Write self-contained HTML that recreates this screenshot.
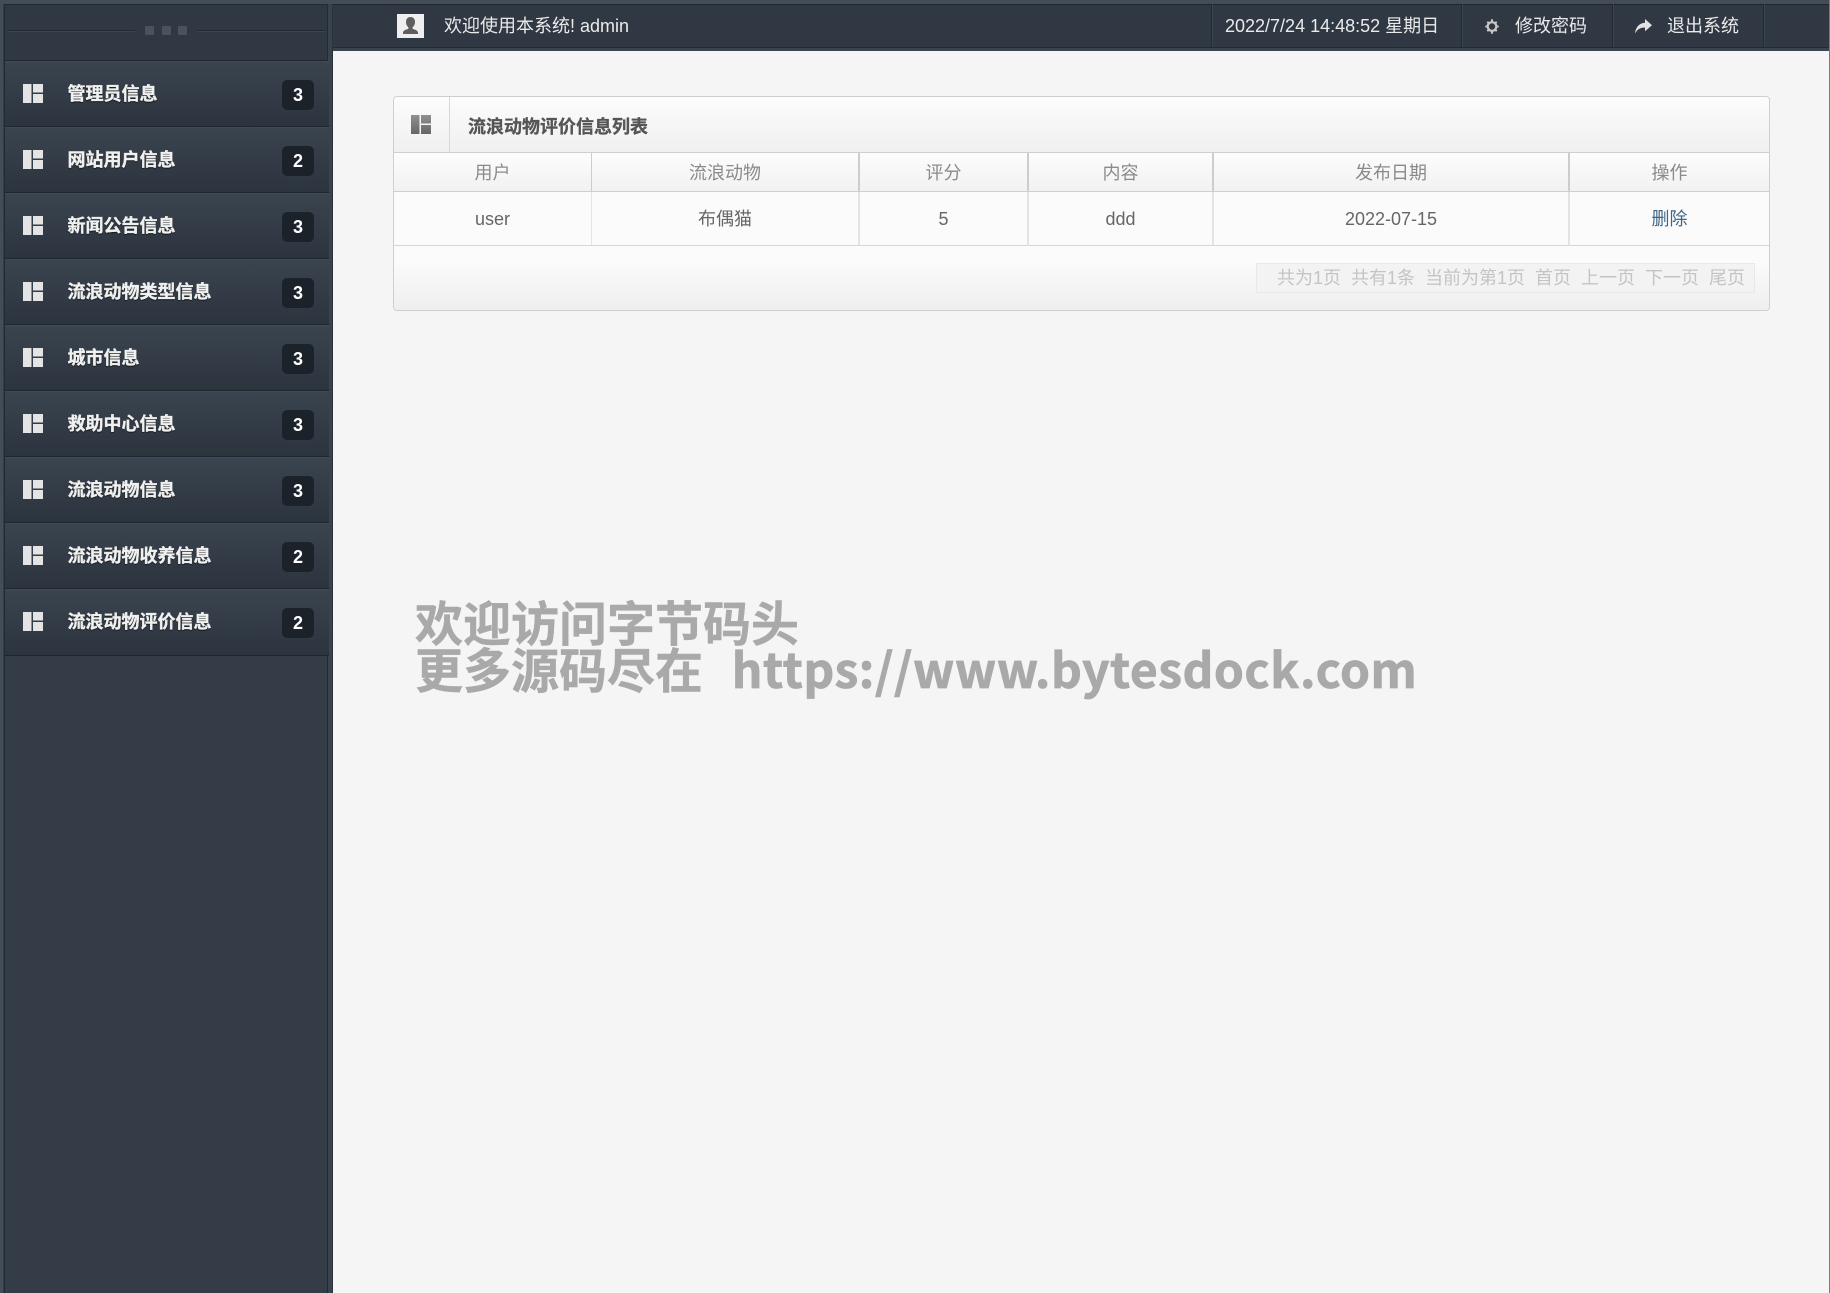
<!DOCTYPE html>
<html lang="zh"><head><meta charset="utf-8"><title>流浪动物评价信息列表</title>
<style>
*{box-sizing:border-box}
html,body{margin:0;padding:0;width:1830px;height:1293px;overflow:hidden}
body{background:#f5f5f5;font:18px/24px "Liberation Sans","Noto Sans CJK SC",sans-serif;color:#666;position:relative}
.a{position:absolute}
#top{left:0;top:0;width:1830px;height:51px;background:#2f3843;border-top:4px solid #434d58;box-shadow:inset 0 1px 0 #20262e,inset 0 -3px 0 #3a444f,inset 0 -4px 0 #232a32}
#side{left:0;top:0;width:333px;height:1293px;background:#333c47;border-left:3px solid #434d58}
#side:before{content:"";position:absolute;left:1px;top:0;bottom:0;width:1px;background:#222a32}
#side:after{content:"";position:absolute;right:0;top:0;bottom:0;width:4px;background:#39434e;border-left:1px solid #222a32;border-right:1px solid #2a323b}
#band{left:0;top:0;width:1830px;height:4px;background:#434d58}
#sh{left:5px;top:4px;width:325px;height:57px;background:#2f3843;border-top:1px solid #222930;border-bottom:1px solid #1e252c}
.ln{height:2px;top:25px;background:#222930;border-bottom:1px solid #3b4550}
.dot{top:21px;width:9px;height:9px;background:#4a535c;border-radius:1px}
.item{left:5px;width:324px;height:66px;background:linear-gradient(#3a444f,#2c343e);border-bottom:1px solid #1e252c;box-shadow:inset 0 1px 0 #424c57}
.item b{position:absolute;left:62.500px;top:20.500px;color:#f0f0f0;font-size:18px;line-height:24px;white-space:nowrap;text-shadow:0 1px 1px #111;-webkit-text-stroke:.35px #f0f0f0}
.badge{position:absolute;left:277px;top:19px;width:32px;height:30px;background:#1b222a;border-radius:5px;color:#fff;font-weight:bold;text-align:center;line-height:31px;font-size:18px;box-shadow:0 0 1px #3c4550}
.ic{position:absolute;left:18px;top:23px}
.tt{color:#eaeaea;white-space:nowrap;top:14px}
.sep{top:4px;width:2px;height:43px;background:#222930;border-right:1px solid #3b4550}
#main{left:333px;top:51px;width:1494px;height:1242px;background:#f5f5f5}
#panel{left:393px;top:96px;width:1377px;height:215px;border:1px solid #cfcfcf;border-radius:4px;background:#fbfbfb;overflow:hidden}
#title{left:0;top:0;width:1375px;height:56px;background:linear-gradient(#fcfcfc,#f0f0f0);border-bottom:1px solid #cfcfcf}
#title b{position:absolute;left:74px;top:17.500px;color:#555;font-size:18px;line-height:24px;-webkit-text-stroke:.3px #555}
.th{top:56px;height:39px;background:linear-gradient(#fdfdfd,#f1f1f1);border-bottom:1px solid #cfcfcf;border-right:2px solid #cdcdcd;text-align:center;line-height:40px;color:#8a8a8a}
.td{top:95px;height:54px;background:#fbfbfb;border-bottom:1px solid #d6d6d6;border-right:2px solid #e4e4e4;text-align:center;line-height:54px;color:#666}
#foot{left:0;top:149px;width:1375px;height:64px;background:linear-gradient(#fbfbfb 25%,#eeeeee)}
#pg{left:862px;top:17px;width:499px;height:30px;background:#f3f3f3;border:1px solid #e8e8e8;color:#c4c4c4;white-space:nowrap;line-height:29px;padding-left:20px;font-size:18px}
#pg span{margin-right:10px}
#wm{left:415px;top:597px;font-family:"Noto Sans CJK SC",sans-serif;font-weight:700;font-size:48px;line-height:47px;color:#a9a9a9;white-space:pre;-webkit-text-stroke:.4px #a9a9a9}
#wm i{font-style:normal;letter-spacing:.5px;margin-left:7px;-webkit-text-stroke:.8px #a9a9a9}
</style></head><body>
<div class="a" id="main"></div>
<div class="a" id="top"></div>
<div class="a" style="left:1829px;top:0;width:1px;height:1293px;background:#8d7377"></div>
<div class="a" style="left:397px;top:14px;width:27px;height:24px;background:#efefef"><svg width="27" height="24" viewBox="0 0 27 24"><path d="M13.500 3c3 0 4.500 2.200 4.500 5 0 2.600-1.200 4.300-2.400 5.300v1.500c2.600 1 5 1.500 5.400 3.700V20H6v-1.500c.4-2.200 2.800-2.700 5.400-3.700v-1.500C10.200 12.300 9 10.600 9 8c0-2.800 1.500-5 4.500-5z" fill="#5f5f5f"/></svg></div>
<div class="a tt" style="left:444px">欢迎使用本系统! admin</div>
<div class="a sep" style="left:1211px"></div>
<div class="a tt" style="left:1225px">2022/7/24 14:48:52 星期日</div>
<div class="a sep" style="left:1461px"></div>
<svg class="a" style="left:1484px;top:18px" width="16" height="17" viewBox="0 0 16 17"><circle cx="8" cy="8.500" r="4.300" fill="none" stroke="#c8c8c8" stroke-width="2.200"/><g stroke="#c8c8c8" stroke-width="2"><path d="M8 1.200v2.500M8 13.300v2.500M1.300 8.500h2.500M12.200 8.500h2.500M3.300 3.800l1.800 1.800M10.900 11.400l1.800 1.800M3.300 13.200l1.800-1.800M10.900 5.600l1.800-1.800"/></g></svg>
<div class="a tt" style="left:1515px">修改密码</div>
<div class="a sep" style="left:1612px"></div>
<svg class="a" style="left:1634px;top:18px" width="19" height="17" viewBox="0 0 19 17"><path d="M11 1l7 6.300-7 6V9.500C6.500 9.500 3.500 11 1 15.500 1.500 9.500 5 5 11 4.700z" fill="#e2e2e2"/></svg>
<div class="a tt" style="left:1667px">退出系统</div>
<div class="a sep" style="left:1763px"></div>

<div class="a" id="side">
<div class="a" id="sh" style="left:2px">
<div class="a ln" style="left:2px;width:128px"></div><div class="a ln" style="left:193px;width:128px"></div>
<div class="a dot" style="left:140px"></div><div class="a dot" style="left:157px"></div><div class="a dot" style="left:173px"></div>
</div>
</div>
<div class="a" style="left:0;top:0;width:333px;height:4px;background:#434d58"></div>

<div class="a item" style="top:61px"><svg class="ic" width="20" height="19" viewBox="0 0 20 19"><path d="M0 0h8.500v19H0zM10 0h10v8.500H10zM10 10h10v9H10z" fill="#e4e4e4"/></svg><b>管理员信息</b><span class="badge">3</span></div>
<div class="a item" style="top:127px"><svg class="ic" width="20" height="19" viewBox="0 0 20 19"><path d="M0 0h8.500v19H0zM10 0h10v8.500H10zM10 10h10v9H10z" fill="#e4e4e4"/></svg><b>网站用户信息</b><span class="badge">2</span></div>
<div class="a item" style="top:193px"><svg class="ic" width="20" height="19" viewBox="0 0 20 19"><path d="M0 0h8.500v19H0zM10 0h10v8.500H10zM10 10h10v9H10z" fill="#e4e4e4"/></svg><b>新闻公告信息</b><span class="badge">3</span></div>
<div class="a item" style="top:259px"><svg class="ic" width="20" height="19" viewBox="0 0 20 19"><path d="M0 0h8.500v19H0zM10 0h10v8.500H10zM10 10h10v9H10z" fill="#e4e4e4"/></svg><b>流浪动物类型信息</b><span class="badge">3</span></div>
<div class="a item" style="top:325px"><svg class="ic" width="20" height="19" viewBox="0 0 20 19"><path d="M0 0h8.500v19H0zM10 0h10v8.500H10zM10 10h10v9H10z" fill="#e4e4e4"/></svg><b>城市信息</b><span class="badge">3</span></div>
<div class="a item" style="top:391px"><svg class="ic" width="20" height="19" viewBox="0 0 20 19"><path d="M0 0h8.500v19H0zM10 0h10v8.500H10zM10 10h10v9H10z" fill="#e4e4e4"/></svg><b>救助中心信息</b><span class="badge">3</span></div>
<div class="a item" style="top:457px"><svg class="ic" width="20" height="19" viewBox="0 0 20 19"><path d="M0 0h8.500v19H0zM10 0h10v8.500H10zM10 10h10v9H10z" fill="#e4e4e4"/></svg><b>流浪动物信息</b><span class="badge">3</span></div>
<div class="a item" style="top:523px"><svg class="ic" width="20" height="19" viewBox="0 0 20 19"><path d="M0 0h8.500v19H0zM10 0h10v8.500H10zM10 10h10v9H10z" fill="#e4e4e4"/></svg><b>流浪动物收养信息</b><span class="badge">2</span></div>
<div class="a item" style="top:589px;height:67px"><svg class="ic" width="20" height="19" viewBox="0 0 20 19"><path d="M0 0h8.500v19H0zM10 0h10v8.500H10zM10 10h10v9H10z" fill="#e4e4e4"/></svg><b>流浪动物评价信息</b><span class="badge">2</span></div>

<div class="a" id="panel">
<div class="a" id="title">
<div class="a" style="left:55px;top:0;width:1px;height:55px;background:#d8d8d8"></div>
<svg class="a" style="left:17px;top:18px" width="20" height="19" viewBox="0 0 20 19"><defs><linearGradient id="g" x1="0" y1="0" x2="0" y2="1"><stop offset="0" stop-color="#909090"/><stop offset="1" stop-color="#666"/></linearGradient></defs><path d="M0 0h8.500v19H0zM10 0h10v8.500H10zM10 10h10v9H10z" fill="url(#g)"/></svg>
<b>流浪动物评价信息列表</b></div>
<div class="a th" style="left:0;width:198px;border-right-width:1px">用户</div>
<div class="a th" style="left:198px;width:268px">流浪动物</div>
<div class="a th" style="left:466px;width:169px">评分</div>
<div class="a th" style="left:635px;width:185px">内容</div>
<div class="a th" style="left:820px;width:356px">发布日期</div>
<div class="a th" style="left:1176px;width:199px;border-right:0">操作</div>
<div class="a td" style="left:0;width:198px;border-right-width:1px">user</div>
<div class="a td" style="left:198px;width:268px">布偶猫</div>
<div class="a td" style="left:466px;width:169px">5</div>
<div class="a td" style="left:635px;width:185px">ddd</div>
<div class="a td" style="left:820px;width:356px">2022-07-15</div>
<div class="a td" style="left:1176px;width:199px;border-right:0;color:#3d6788">删除</div>
<div class="a" id="foot"><div class="a" id="pg"><span>共为1页</span><span>共有1条</span><span>当前为第1页</span><span>首页</span><span>上一页</span><span>下一页</span><span>尾页</span></div></div>
</div>

<div class="a" id="wm">欢迎访问字节码头
更多源码尽在  <i>https://www.bytesdock.com</i></div>
</body></html>
